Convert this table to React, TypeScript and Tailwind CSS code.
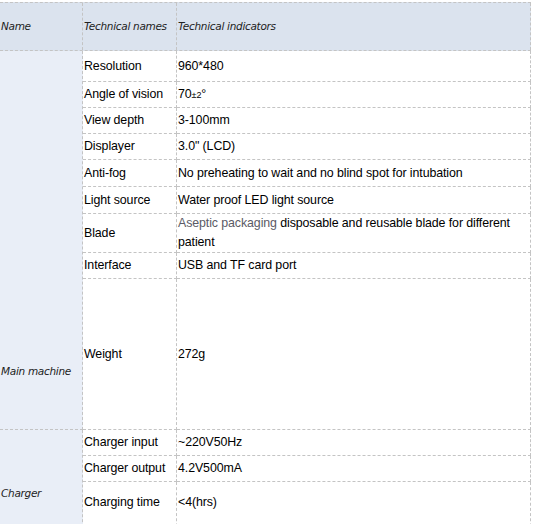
const line = 'border-dashed border-[#c4c4c4]'

type Row = { name: string; value: React.ReactNode; h: string; top?: boolean }

const mainRows: Row[] = [
  { name: 'Resolution', value: '960*480', h: 'h-[31px]' },
  {
    name: 'Angle of vision',
    value: (
      <>
        70<span className="text-[9px]">±2</span>°
      </>
    ),
    h: 'h-[26px]',
  },
  { name: 'View depth', value: '3-100mm', h: 'h-[26px]' },
  { name: 'Displayer', value: '3.0" (LCD)', h: 'h-[26px]' },
  { name: 'Anti-fog', value: 'No preheating to wait and no blind spot for intubation', h: 'h-[27px]' },
  { name: 'Light source', value: 'Water proof LED light source', h: 'h-[27px]' },
  {
    name: 'Blade',
    value: (
      <>
        <span className="text-[#5b5b66]">Aseptic packaging</span> disposable and reusable blade for different patient
      </>
    ),
    h: 'h-[39px]',
  },
  { name: 'Interface', value: 'USB and TF card port', h: 'h-[26px]' },
  { name: 'Weight', value: '272g', h: 'h-[151px]' },
]

const chargerRows: Row[] = [
  { name: 'Charger input', value: '~220V50Hz', h: 'h-[26px]' },
  { name: 'Charger output', value: '4.2V500mA', h: 'h-[26px]' },
  { name: 'Charging time', value: '<4(hrs)', h: 'h-[60px]', top: true },
]

function Rows({ rows }: { rows: Row[] }) {
  return (
    <div className="flex flex-col">
      {rows.map((r) => {
        const align = r.top ? 'items-start pt-[11px]' : 'items-center'
        return (
          <div key={r.name} className={`flex bg-white ${r.h}`}>
            <div className={`w-[94px] shrink-0 border-r border-b ${line} flex ${align} pl-[1px]`}>{r.name}</div>
            <div className={`w-[354px] shrink-0 border-r border-b ${line} flex ${align} pl-[1px] pr-1 leading-[19px]`}>
              <p>{r.value}</p>
            </div>
          </div>
        )
      })}
    </div>
  )
}

export default function App() {
  return (
    <div className="w-[533px] h-[524px] overflow-hidden bg-white pt-[2px] text-[12.4px] text-black font-['Liberation_Sans',Arial,sans-serif] tracking-[-0.1px]">
      <div className="w-[531px]">
        <div className={`flex h-[49px] bg-[#dbe3ee] border-t border-b ${line} italic text-[10.5px] text-[#222] font-['DejaVu_Sans',sans-serif] tracking-[-0.3px]`}>
          <div className={`w-[83px] shrink-0 border-r ${line} flex items-center pl-[1px]`}>Name</div>
          <div className={`w-[94px] shrink-0 border-r ${line} flex items-center pl-[1px] whitespace-nowrap`}>Technical names</div>
          <div className={`w-[354px] shrink-0 border-r ${line} flex items-center pl-[1px]`}>Technical indicators</div>
        </div>

        <div className="flex">
          <div className={`w-[83px] shrink-0 bg-[#e9eef7] border-r border-b ${line} flex items-end pb-[49px] pl-[1px] italic text-[10.5px] text-[#222] font-['DejaVu_Sans',sans-serif] tracking-[-0.3px]`}>
            Main machine
          </div>
          <Rows rows={mainRows} />
        </div>

        <div className="flex">
          <div className={`w-[83px] shrink-0 bg-[#e9eef7] border-r border-b ${line} pt-[56px] pl-[1px] italic text-[10.5px] text-[#222] font-['DejaVu_Sans',sans-serif] tracking-[-0.3px]`}>
            Charger
          </div>
          <Rows rows={chargerRows} />
        </div>
      </div>
    </div>
  )
}
